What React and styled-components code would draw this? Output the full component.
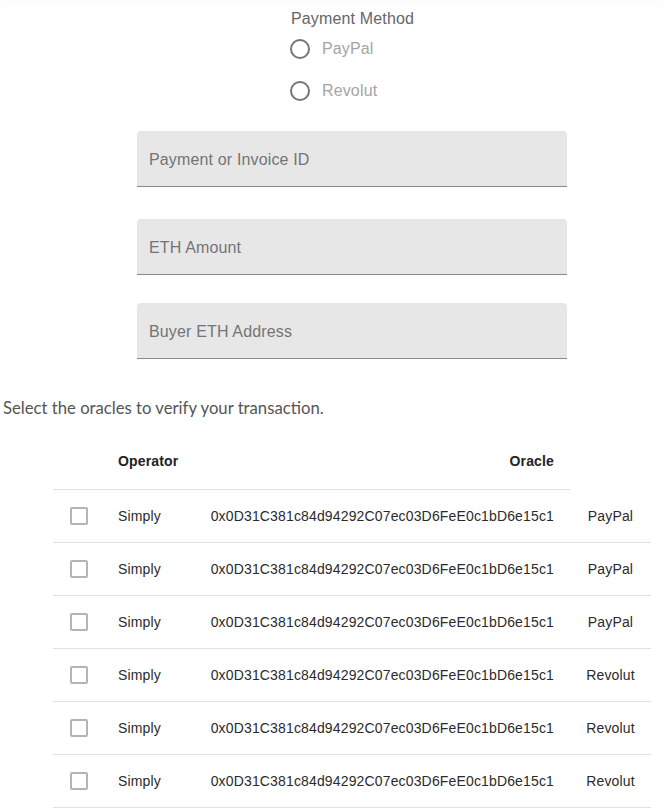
import React from 'react';
import styled, { createGlobalStyle } from 'styled-components';

const GlobalStyle = createGlobalStyle`
  body {
    margin: 0;
    background: #fff;
    font-family: "Liberation Sans", Arial, sans-serif;
    overflow-x: hidden;
  }
`;

const Page = styled.div`
  width: 669px;
  position: relative;
`;

const TopShade = styled.div`
  height: 1px;
  margin-top: -1px;
  box-shadow: 0 2px 9px rgba(0, 0, 0, 0.13);
`;

const FormArea = styled.div`
  display: flex;
  flex-direction: column;
  align-items: center;
  padding-left: 35px;
  padding-top: 10px;
  letter-spacing: 0.00938em;
`;

const MethodGroup = styled.div`
  display: flex;
  flex-direction: column;
  align-items: flex-start;
`;

const Legend = styled.div`
  font-size: 16px;
  line-height: 18px;
  color: #666;
  margin-left: 1px;
`;

const RadioRow = styled.label`
  display: flex;
  align-items: center;
  height: 42px;
  gap: 12px;
  font-size: 16px;
  color: #a5a5a5;
  cursor: pointer;
`;

const RadioCircle = styled.span`
  box-sizing: border-box;
  width: 20px;
  height: 20px;
  border-radius: 50%;
  border: 2px solid #757575;
`;

const Field = styled.div`
  box-sizing: border-box;
  width: 430px;
  height: 56px;
  margin-top: ${p => p.$gap}px;
  background: #e7e7e7;
  border-radius: 4px 4px 0 0;
  border-bottom: 1px solid #8a8a8a;
  display: flex;
  align-items: center;
  padding: 2px 12px 0;
  font-size: 16px;
  color: #747474;
`;

const Intro = styled.p`
  margin: 39px 0 0 3px;
  font-family: Lato, "Open Sans", sans-serif;
  font-size: 16.7px;
  line-height: 20px;
  color: #555;
`;

const Table = styled.table`
  margin: 15px 0 0 53px;
  width: 598px;
  table-layout: fixed;
  border-collapse: collapse;
  font-size: 14px;
  letter-spacing: 0.01071em;
  color: #2b2b2b;
`;

const HeadCell = styled.th`
  height: 56px;
  padding: 0 16px;
  font-weight: 700;
  color: #222;
  text-align: ${p => p.$align || 'left'};
  border-bottom: ${p => (p.$line ? '1px solid #e0e0e0' : 'none')};
`;

const Row = styled.tr`
  border-bottom: 1px solid #e0e0e0;
`;

const Cell = styled.td`
  height: 52px;
  padding: 0 ${p => p.$right ?? 16}px 0 ${p => p.$left ?? 16}px;
  text-align: ${p => p.$align || 'left'};
  white-space: nowrap;
`;

const Box = styled.span`
  display: block;
  box-sizing: border-box;
  width: 18px;
  height: 18px;
  border: 2px solid #b4b4b4;
  border-radius: 2px;
`;

const address = '0x0D31C381c84d94292C07ec03D6FeE0c1bD6e15c1';
const oracles = ['PayPal', 'PayPal', 'PayPal', 'Revolut', 'Revolut', 'Revolut'];

const App = () => {
  return (
    <Page>
      <GlobalStyle />
      <TopShade />
      <FormArea>
        <MethodGroup>
          <Legend>Payment Method</Legend>
          <RadioRow>
            <RadioCircle />
            PayPal
          </RadioRow>
          <RadioRow>
            <RadioCircle />
            Revolut
          </RadioRow>
        </MethodGroup>
        <Field $gap={19}>Payment or Invoice ID</Field>
        <Field $gap={32}>ETH Amount</Field>
        <Field $gap={28}>Buyer ETH Address</Field>
      </FormArea>

      <Intro>Select the oracles to verify your transaction.</Intro>

      <Table>
        <colgroup>
          <col style={{ width: 49 }} />
          <col style={{ width: 92 }} />
          <col style={{ width: 376 }} />
          <col style={{ width: 81 }} />
        </colgroup>
        <thead>
          <tr>
            <HeadCell $line />
            <HeadCell $line>Operator</HeadCell>
            <HeadCell $line $align="right">Oracle</HeadCell>
            <HeadCell />
          </tr>
        </thead>
        <tbody>
          {oracles.map((method, i) => (
            <Row key={i}>
              <Cell $left={17}>
                <Box />
              </Cell>
              <Cell>Simply</Cell>
              <Cell $align="right" $left={0}>{address}</Cell>
              <Cell $align="center" $left={0} $right={0}>{method}</Cell>
            </Row>
          ))}
        </tbody>
      </Table>
    </Page>
  );
};

export default App;
